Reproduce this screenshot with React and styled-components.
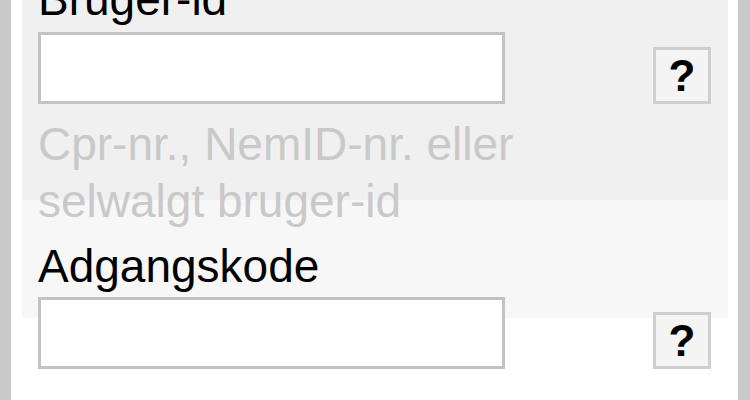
import React from 'react';
import styled, { createGlobalStyle } from 'styled-components';

const GlobalStyle = createGlobalStyle`
  html, body {
    margin: 0;
    padding: 0;
    background: #ffffff;
  }
  body {
    font-family: "Liberation Sans", Arial, sans-serif;
  }
`;

const Frame = styled.div`
  height: 400px;
  overflow: hidden;
  box-sizing: border-box;
  background: #ffffff;
  border-left: 11px solid #c9c9c9;
  border-right: 12px solid #c9c9c9;
  padding: 0 10px 0 11px;
  display: flex;
`;

const Panel = styled.form`
  flex: 1;
  display: flex;
  flex-direction: column;
  padding: 0 17px 0 16px;
  background: linear-gradient(
    to bottom,
    #f0f0f0 0,
    #f0f0f0 200px,
    #f7f7f7 200px,
    #f7f7f7 318px,
    #ffffff 318px
  );
`;

const Label = styled.label`
  display: block;
  font-size: 46px;
  line-height: 52px;
  color: #000000;
  margin-top: ${(props) => props.$offset}px;
`;

const InputRow = styled.div`
  display: flex;
  justify-content: space-between;
  align-items: flex-end;
  margin-top: ${(props) => props.$gap}px;
`;

const TextInput = styled.input`
  width: 467px;
  height: 72px;
  box-sizing: border-box;
  border: 3px solid #c3c3c3;
  background: #ffffff;
  font: inherit;
  padding: 0 8px;
  outline: none;
`;

const HelpButton = styled.button`
  width: 58px;
  height: 57px;
  box-sizing: border-box;
  border: 3px solid #cfcfcf;
  background: #f4f4f4;
  color: #000000;
  font-family: "Liberation Sans", Arial, sans-serif;
  font-weight: bold;
  font-size: 44px;
  line-height: 1;
  padding: 0;
  display: flex;
  align-items: center;
  justify-content: center;
  cursor: pointer;
`;

const Hint = styled.div`
  margin-top: 12px;
  font-size: 46px;
  line-height: 57px;
  color: #c9c9c9;
`;

const App = () => (
  <>
    <GlobalStyle />
    <Frame>
      <Panel onSubmit={(e) => e.preventDefault()}>
        <Label htmlFor="userid" $offset={-27}>Bruger-id</Label>
        <InputRow $gap={7}>
          <TextInput id="userid" type="text" />
          <HelpButton type="button">?</HelpButton>
        </InputRow>
        <Hint>
          Cpr-nr., NemID-nr. eller
          <br />
          selwalgt bruger-id
        </Hint>
        <Label htmlFor="password" $offset={10}>Adgangskode</Label>
        <InputRow $gap={5}>
          <TextInput id="password" type="password" />
          <HelpButton type="button">?</HelpButton>
        </InputRow>
      </Panel>
    </Frame>
  </>
);

export default App;
